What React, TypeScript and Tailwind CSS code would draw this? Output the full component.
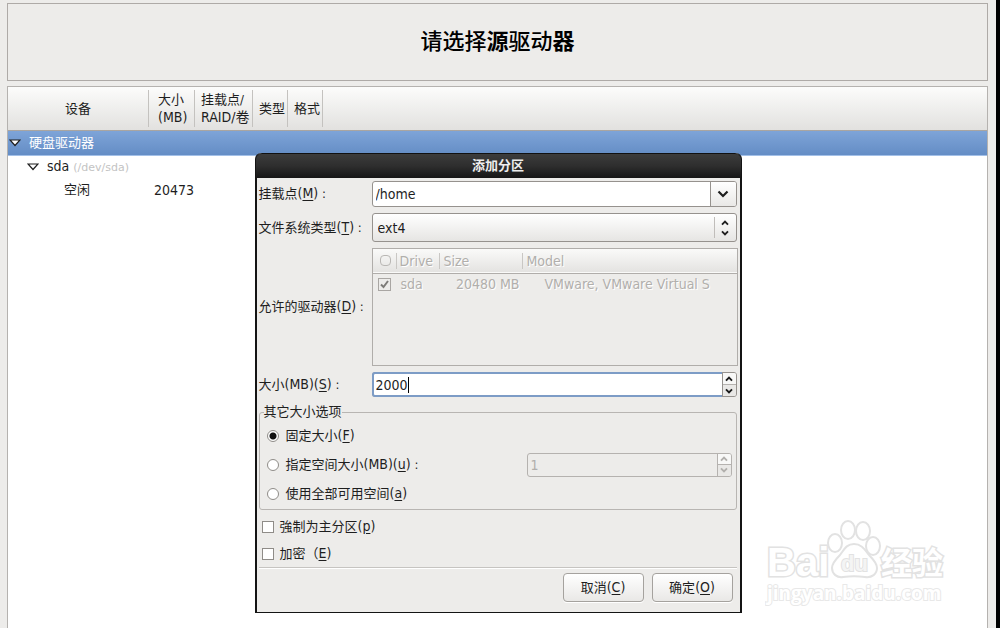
import React, { useState } from 'react';

const fieldBorder = 'border border-[#96928e] rounded-[3px]';
const faded = 'text-[#b1afac] [text-shadow:1px_1px_0_#fff]';

function Arrow({ up = false, size = 'small' }: { up?: boolean; size?: string }) {
    const big = size === 'big';
    return (
        <svg width={big ? 12 : 8} height={big ? 8 : 6} viewBox="0 0 12 8" fill="none" stroke="currentColor" strokeWidth={big ? 2.2 : 2.8} aria-hidden="true">
            <path d={up ? 'M1.5 6.5L6 2l4.5 4.5' : 'M1.5 1.5L6 6l4.5-4.5'} />
        </svg>
    );
}

function Expander() {
    return (
        <svg width="12" height="8" viewBox="0 0 12 8" className="shrink-0" aria-hidden="true">
            <path d="M1 1h10L6 6.5z" fill="#fff" stroke="#1e1e1e" strokeWidth="1.2" />
        </svg>
    );
}

function Key({ children }: { children: string }) {
    return <span className="text-sm leading-4">(<span className="underline underline-offset-2">{children}</span>)</span>;
}

function SpinButtons({ disabled = false }: { disabled?: boolean }) {
    return (
        <div className={`flex w-[14px] flex-col border-l ${disabled ? 'border-[#b5b2af] text-[#b1afac]' : 'border-[#96928e] text-[#1a1a1a]'}`}>
            <button type="button" aria-label="增加" disabled={disabled} className="flex flex-1 items-center justify-center rounded-tr-[2px] border-b border-[#b5b2af] bg-[#f8f8f7]">
                <Arrow up />
            </button>
            <button type="button" aria-label="减少" disabled={disabled} className="flex flex-1 items-center justify-center rounded-br-[2px] bg-[#e9e8e6]">
                <Arrow />
            </button>
        </div>
    );
}

function Watermark() {
    return (
        <svg width="184" height="90" viewBox="0 0 184 90" className="absolute right-[47px] bottom-[18px]" fill="#fff" stroke="#e2e2e2" strokeWidth="2" aria-hidden="true">
            <text x="2" y="56" fontSize="40" fontWeight="700" fontFamily="'Liberation Sans', sans-serif" paintOrder="stroke" strokeWidth="3">Bai</text>
            <ellipse cx="70" cy="23" rx="7" ry="9" />
            <ellipse cx="83" cy="10" rx="7" ry="9" />
            <ellipse cx="98" cy="11" rx="7" ry="9" />
            <ellipse cx="108" cy="26" rx="7" ry="9" />
            <path d="M89 24c-8 0-10 6-14 11-4 4-8 8-8 13 0 6 5 10 11 9 7-1 15-1 22 0 7 1 12-3 12-9 0-5-4-9-8-13-4-5-7-11-15-11z" />
            <text x="76" y="51" fontSize="22" fontWeight="700" fontFamily="'Liberation Sans', sans-serif" fill="#f4f4f4" paintOrder="stroke">du</text>
            <text x="116" y="54" fontSize="31" fontWeight="700" fontFamily="'Noto Sans CJK SC', sans-serif" paintOrder="stroke" strokeWidth="3">经验</text>
            <text x="2" y="80" fontSize="19" fontWeight="700" fontFamily="'Open Sans', sans-serif" paintOrder="stroke" stroke="#e8e8e8">jingyan.baidu.com</text>
        </svg>
    );
}

function DeviceTable() {
    const headers = [
        { text: '设备', width: 'w-[141px]', align: 'justify-center' },
        { text: '大小', second: '(MB)', width: 'w-[46px]', align: 'pl-[9px]' },
        { text: '挂载点/', second: 'RAID/卷', width: 'w-[58px]', align: 'pl-[6px]' },
        { text: '类型', width: 'w-[35px]', align: 'pl-[6px]' },
        { text: '格式', width: 'w-[35px]', align: 'pl-[6px]' },
    ];
    return (
        <table className="w-full table-fixed border-collapse text-left">
            <thead>
                <tr className="border-b border-[#a9a5a1] bg-linear-to-b from-[#fcfcfb] to-[#e2e1df]">
                    {headers.map((h) => (
                        <th key={h.text} className={`${h.width} p-0 py-[3px] font-normal`}>
                            <div className={`flex h-[37px] items-center border-r border-[#c4c2bf] leading-[18px] whitespace-nowrap ${h.align}`}>
                                <span>{h.text}{h.second && <><br /><span className="text-sm leading-4">{h.second}</span></>}</span>
                            </div>
                        </th>
                    ))}
                    <th className="p-0" aria-label="空"></th>
                </tr>
            </thead>
            <tbody>
                <tr className="h-[25px] border-b border-[#a3c0e8] bg-linear-to-b from-[#7ea4d8] to-[#648dc5] text-white">
                    <td className="p-0" colSpan={6}>
                        <div className="flex items-center gap-2 pl-px"><Expander />硬盘驱动器</div>
                    </td>
                </tr>
                <tr className="h-[23px]">
                    <td className="p-0" colSpan={6}>
                        <div className="flex items-center gap-2 pl-[19px] text-sm leading-[18px]">
                            <Expander />
                            <span>sda <span className="font-['DejaVu_Sans',sans-serif] text-[11px] text-[#c3c3c3]">(/dev/sda)</span></span>
                        </div>
                    </td>
                </tr>
                <tr className="h-[23px]">
                    <td className="p-0 pl-14">空闲</td>
                    <td className="p-0 pl-[5px] text-sm leading-[18px]">20473</td>
                    <td colSpan={4}></td>
                </tr>
            </tbody>
        </table>
    );
}

function DriveTable() {
    return (
        <div className="h-[118px] border border-[#b0adaa]">
            <table className={`w-full table-fixed border-collapse text-left text-sm leading-4 ${faded}`}>
                <thead>
                    <tr className="h-6 border-b border-[#b0adaa] bg-linear-to-b from-[#fafaf9] to-[#e4e3e1]">
                        <th className="w-6 p-0">
                            <div className="flex h-4 items-center justify-end border-r border-[#c9c7c4] pr-[5px]">
                                <span className="size-[11px] rounded-[4px] border border-[#b9b7b4]"></span>
                            </div>
                        </th>
                        <th className="w-[43px] p-0 font-normal"><div className="h-4 border-r border-[#c9c7c4] pl-[3px]">Drive</div></th>
                        <th className="w-[83px] p-0 font-normal"><div className="h-4 border-r border-[#c9c7c4] pl-1">Size</div></th>
                        <th className="p-0 pl-1 font-normal">Model</th>
                    </tr>
                </thead>
                <tbody>
                    <tr className="h-[22px]">
                        <td className="p-0">
                            <label className="ml-[5px] flex size-[13px] items-center justify-center border border-[#a9a6a3]">
                                <input type="checkbox" aria-label="sda" defaultChecked disabled className="sr-only" />
                                <svg width="9" height="9" viewBox="0 0 9 9" fill="none" stroke="#7d7b78" strokeWidth="2" aria-hidden="true"><path d="M1 4.500L3.500 7 8 1" /></svg>
                            </label>
                        </td>
                        <td className="p-0 pl-1">sda</td>
                        <td className="p-0 text-right"><div className="pr-[3px]">20480 MB</div></td>
                        <td className="p-0 pl-[22px] whitespace-nowrap">VMware, VMware Virtual S</td>
                    </tr>
                </tbody>
            </table>
        </div>
    );
}

const radioClass = 'size-3 shrink-0 appearance-none rounded-full border border-[#8f8c88] bg-white checked:bg-[radial-gradient(circle,#111_0_3px,#fff_4px)]';
const checkClass = 'size-3 shrink-0 appearance-none border border-[#8f8c88] bg-white checked:bg-[#555]';
const buttonClass = 'h-[29px] w-[81px] rounded-[4px] border border-[#a5a29e] bg-linear-to-b from-white to-[#e9e8e6] shadow-[0_1px_0_#fff]';

function AddPartition() {
    const [mount, setMount] = useState('/home');
    const [size, setSize] = useState('2000');
    const [mode, setMode] = useState('fixed');

    return (
        <form role="dialog" aria-label="添加分区" className="w-[487px] rounded-t-[6px] border-2 border-t-0 border-b border-[#141414] bg-[#edecea]">
            <h2 className="-mx-px h-[25px] rounded-t-[6px] border-t border-[#111] bg-linear-to-b from-[#3c3c3c] via-[#2e2e2e] to-[#161616] text-center text-[13px] leading-6 font-bold text-[#eee]">添加分区</h2>
            <div className="px-[2px] pt-[3px] pb-[10px]">
                <div className="grid grid-cols-[113px_minmax(0,1fr)] items-center gap-y-[6px]">
                    <label htmlFor="mount">挂载点<Key>M</Key> :</label>
                    <div className={`mr-px flex h-[26px] bg-white ${fieldBorder}`}>
                        <input id="mount" value={mount} onChange={(e) => setMount(e.target.value)} className="min-w-0 flex-1 pl-[3px] text-sm outline-none" />
                        <button type="button" aria-label="展开" className="flex w-[26px] items-center justify-center rounded-r-[2px] border-l border-[#96928e] bg-linear-to-b from-white to-[#e9e8e6]">
                            <Arrow size="big" />
                        </button>
                    </div>

                    <label htmlFor="fstype">文件系统类型<Key>T</Key> :</label>
                    <div className={`relative mr-px h-[29px] bg-linear-to-b from-white to-[#e6e5e3] ${fieldBorder}`}>
                        <select id="fstype" className="h-full w-full appearance-none bg-transparent pl-[5px] text-sm outline-none">
                            <option>ext4</option>
                        </select>
                        <span className="pointer-events-none absolute inset-y-[3px] right-0 flex w-[22px] flex-col items-center justify-center gap-1 border-l border-[#c0bdba]">
                            <Arrow up />
                            <Arrow />
                        </span>
                    </div>

                    <span>允许的驱动器<Key>D</Key> :</span>
                    <DriveTable />

                    <label htmlFor="size">大小<span className="text-sm leading-4">(MB)</span><Key>S</Key> :</label>
                    <div className={`mr-px flex h-[25px] ${fieldBorder}`}>
                        <div className="-m-px mr-0 flex flex-1 items-center rounded-l-[3px] border-2 border-r-0 border-[#7d9cc6] bg-white pl-[2px]">
                            <input id="size" value={size} onChange={(e) => setSize(e.target.value)} className="field-sizing-content text-sm leading-4 outline-none" />
                            <span className="h-4 w-px bg-black"></span>
                        </div>
                        <SpinButtons />
                    </div>
                </div>

                <fieldset className="mt-[7px] mr-px rounded-[3px] border border-[#b8b5b2] px-1 pb-px">
                    <legend className="leading-4">其它大小选项</legend>
                    <div className="flex h-[30px] items-center pt-px pl-[3px]">
                        <label className="flex items-center gap-[7px]">
                            <input type="radio" name="mode" className={radioClass} checked={mode === 'fixed'} onChange={() => setMode('fixed')} />
                            <span>固定大小<Key>F</Key></span>
                        </label>
                    </div>
                    <div className="flex h-[29px] items-center justify-between pl-[3px]">
                        <label className="flex items-center gap-[7px]">
                            <input type="radio" name="mode" className={radioClass} checked={mode === 'upto'} onChange={() => setMode('upto')} />
                            <span>指定空间大小<span className="text-sm leading-4">(MB)</span><Key>u</Key> :</span>
                        </label>
                        <div className="flex h-6 w-[205px] rounded-[3px] border border-[#b5b2af]">
                            <input aria-label="指定空间大小" defaultValue="1" disabled className="min-w-0 flex-1 pl-[3px] text-sm text-[#b1afac]" />
                            <SpinButtons disabled />
                        </div>
                    </div>
                    <div className="flex h-[29px] items-center pl-[3px]">
                        <label className="flex items-center gap-[7px]">
                            <input type="radio" name="mode" className={radioClass} checked={mode === 'all'} onChange={() => setMode('all')} />
                            <span>使用全部可用空间<Key>a</Key></span>
                        </label>
                    </div>
                </fieldset>

                <div className="mr-px border-b border-[#c6c4c1] pt-[3px] pl-[3px] shadow-[0_1px_0_#fff]">
                    <label className="flex h-[27px] items-center gap-[6px]">
                        <input type="checkbox" className={checkClass} />
                        <span>強制为主分区<Key>p</Key></span>
                    </label>
                    <label className="flex h-[27px] items-center gap-[6px]">
                        <input type="checkbox" className={checkClass} />
                        <span>加密（<span className="text-sm leading-4"><span className="underline underline-offset-2">E</span>)</span></span>
                    </label>
                </div>

                <div className="mt-[5px] mr-[5px] flex justify-end gap-2">
                    <button type="button" className={buttonClass}>取消<Key>C</Key></button>
                    <button type="button" className={buttonClass}>确定<Key>O</Key></button>
                </div>
            </div>
        </form>
    );
}

export default function App() {
    return (
        <div className="flex min-h-screen bg-black font-['DejaVu_Sans_Condensed','DejaVu_Sans','Noto_Sans_CJK_SC',sans-serif] text-[13px] leading-[18px] text-[#1e1e1e]">
            <main className="relative mr-1 flex flex-1 flex-col bg-[#edecea] pt-[3px] pr-2 pl-[7px]">
                <header className="flex h-[78px] items-center justify-center border border-[#aeaaa7]">
                    <h1 className="text-[22px] leading-8 font-medium text-black">请选择<b>源</b>驱动<b>器</b></h1>
                </header>
                <section className="mt-[5px] flex-1 border border-b-0 border-[#b5b2af] bg-white">
                    <DeviceTable />
                </section>
                <Watermark />
                <div className="absolute inset-x-0 top-[153px] flex justify-center">
                    <AddPartition />
                </div>
            </main>
        </div>
    );
}
